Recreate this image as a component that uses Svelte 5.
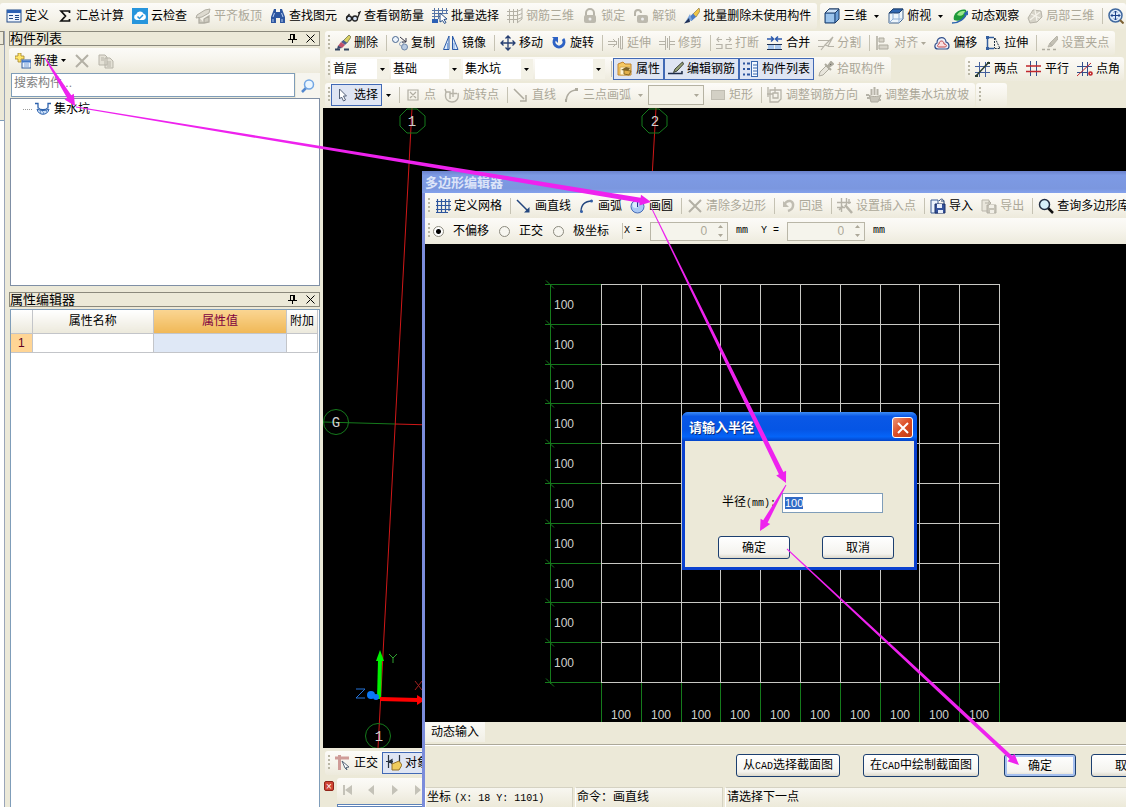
<script lang="ts">
  /**
   * Rebar modelling workspace: toolbars, component list, property editor,
   * drawing canvas, polygon editor window and the radius prompt.
   */
  import { onMount } from 'svelte';

  interface Tool {
    icon?: string;
    text?: string;
    off?: boolean;
    on?: boolean;
    arrow?: boolean;
    tight?: boolean;
    sep?: boolean;
  }

  const sep: Tool = { sep: true };

  const icons: Record<string, string> = {
    define: '<rect x="1" y="2" width="14" height="12" fill="#eef4fd" stroke="#234a86"/><path d="M1 3.500h14" stroke="#2d62b5" stroke-width="3"/><path d="M3 7.500h4M3 10.500h4M9 7.500h4M9 9.500h4M9 11.500h4" stroke="#234a86"/>',
    sigma: '<path d="M12.500 5V3H4l4.500 5L4 13h8.500v-2" fill="none" stroke="#111" stroke-width="1.700"/>',
    cloud: '<rect width="16" height="16" fill="#2795dc"/><path d="M4.500 12a3 3 0 0 1-.3-5.800 4 4 0 0 1 7.400-.4A3.200 3.200 0 0 1 11.500 12z" fill="#fff"/><path d="M5.500 8.500l2 2 3.500-3.500" fill="none" stroke="#2795dc" stroke-width="1.500"/>',
    slab: '<path d="M2 7l8-5 5-1-1 4-7 4-6 1z" fill="#dddad0" stroke="#b0ada2"/><path d="M4 9v6h5v-4l5-3v6l-5 1" fill="#cfccc1" stroke="#b0ada2" stroke-width="1.300"/>',
    find: '<path d="M4 1h2v3h4V1h2l3 8v6h-5v-5H6v5H1V9z" fill="#2d56a0"/><path d="M4.500 5L3 9M11.500 5L13 9M3 11v3M12 11v3" stroke="#b7cdf2"/>',
    glasses: '<circle cx="4" cy="10.500" r="2.500" fill="#d5e3f5" stroke="#222" stroke-width="1.300"/><circle cx="10" cy="10.500" r="2.500" fill="#d5e3f5" stroke="#222" stroke-width="1.300"/><path d="M1.500 10l3-4M12.500 10l2.500-6-2 1" fill="none" stroke="#222" stroke-width="1.300"/>',
    batch: '<path d="M0 2.500h16M0 5.500h16M0 8.500h8M2.500 0v11M6.500 0v11M10.500 0v5M14.500 0v6" stroke="#5675a7"/><path d="M0 11h6v4H0z" fill="#2c60b5"/><path d="M8 5l7 6-3 .5 2 3-1.500 1-2-3L8 14z" fill="#fff" stroke="#234a86"/>',
    rebar3d: '<path d="M0 3.500h10l5-2M0 7.500h10l5-2M0 11.500h10l5-2M2.500 1v14M6.500 1v14M10.500 1v14M15 0v11l-5 4" fill="none" stroke="#b4b1a6"/>',
    lock: '<path d="M4 8V5a4 4 0 0 1 8 0v3" fill="none" stroke="#b7b4a9" stroke-width="2"/><rect x="2" y="7" width="12" height="8" rx="2" fill="#bcb9ae"/><circle cx="8" cy="11" r="1.500" fill="#eee"/>',
    unlock: '<path d="M2 8V5a3 3 0 0 1 6 0" fill="none" stroke="#b7b4a9" stroke-width="2"/><rect x="4" y="7" width="11" height="8" rx="2" fill="#bcb9ae"/><circle cx="9.500" cy="11" r="1.500" fill="#eee"/>',
    brush: '<path d="M15 0L9 6l3 3 4-6z" fill="#f0c648" stroke="#8c7a48" stroke-width=".7"/><path d="M9 5.500L4.500 10l3 3L12 9z" fill="#4a7cc6"/><path d="M6 6L1 14.500 8 12z" fill="#7aa4dc"/><path d="M5 10l-5 5.500 6-1.500z" fill="#1e2f55"/>',
    erase: '<path d="M14 0l2 2-4 6-4-2z" fill="#d9cf62" stroke="#5d6440" stroke-width=".7"/><path d="M8.500 5L12 8l-2 2-4-3z" fill="#4a5f8e"/><path d="M6 7l4 3-3 3-4-2z" fill="#c0506a"/><path d="M3 10.500L7 13l-5 1z" fill="#3b486d"/><path d="M0 14.500h5M9 14.500h5" stroke="#33445e" stroke-width="2"/>',
    cube: '<path d="M1 5l4-4h10v10l-4 4H1z" fill="#6da0d8" stroke="#1c3d69"/><path d="M1 5l4-4h10l-4 4z" fill="#cfe3f8" stroke="#1c3d69"/><path d="M11 5v10" stroke="#1c3d69"/><path d="M2 6h8v8H2z" fill="#9cc4ec"/>',
    cubetop: '<path d="M1 5l4-4h10v10l-4 4H1z" fill="#edf5fc" stroke="#41638c"/><path d="M1 5l4-4h10l-4 4z" fill="#2f68b4" stroke="#1c3d69"/><path d="M11 5v10M5 5v6h10M1 15l4-4" fill="none" stroke="#8fb0d8"/>',
    orbit: '<path d="M2 12C0 6 8 0 14 2c3 6-4 13-12 10z" fill="#1f9a3a"/><path d="M5 7c2-4 5-4 8-4-1 4-4 6-8 4z" fill="#9be88a"/><path d="M0 15c7 0 13-4 15-11l-3 2M15 4l1 3" fill="none" stroke="#2c64b0" stroke-width="1.500"/>',
    local3d: '<path d="M1 10l5-8 8 1 1 6-5 5-7 1z" fill="#d6d3c8" stroke="#b6b3a8"/><path d="M4 6l9 4M8 2l2 11M13 4L3 12" stroke="#f4f2ea" stroke-width="1.300"/>',
    zoomall: '<circle cx="7.500" cy="7.500" r="6.500" fill="#dbe9fa" stroke="#41699f" stroke-width="1.500"/><path d="M12 12l3.500 3.500" stroke="#7b6035" stroke-width="2"/><path d="M7.500 3v9M3 7.500h9M6 4.500L7.500 3 9 4.500M6 10.500L7.500 12 9 10.500M4.500 6L3 7.500 4.500 9M10.500 6L12 7.500 10.500 9" fill="none" stroke="#1c428b"/>',
    copy: '<circle cx="3.500" cy="4.500" r="3" fill="#edf4fc" stroke="#47658f"/><circle cx="12.500" cy="12" r="3" fill="#b9cbe1" stroke="#6f87a9"/><circle cx="9.500" cy="9" r="2" fill="none" stroke="#8fa2be"/><path d="M8 2l6 5M14 7V3M14 7h-4" stroke="#334" fill="none"/>',
    mirror: '<path d="M6 1v13.500H.5zM9.500 1v13.500H15z" fill="#dceafa" stroke="#2a5aa8"/><path d="M4.500 8v6M11 8v6" stroke="#79a3dc"/>',
    move: '<path d="M8 1v14M1 8h14M5.500 3.500L8 1l2.500 2.500M5.500 12.500L8 15l2.500-2.500M3.500 5.500L1 8l2.500 2.500M12.500 5.500L15 8l-2.500 2.500" fill="none" stroke="#263f72" stroke-width="1.300"/>',
    rotate: '<path d="M4 4a5 5 0 1 0 8 0" fill="none" stroke="#2d62c4" stroke-width="3"/><path d="M1 2h6v6z" fill="#2d62c4"/>',
    extend: '<path d="M0 6.500h9M0 9.500h9M5 4l4 4-4 4M10.500 3v10M14.500 1v13M12.500 1v13h2" stroke="#b6b3a8" fill="none"/>',
    trim: '<path d="M0 6.500h6M0 9.500h6M11 6.500h5M11 9.500h5M6.500 1v14M10.500 1v14M8.500 3v10" stroke="#b6b3a8"/>',
    breaks: '<path d="M0 9.500h6v4H0M16 9.500h-6v4h6M1 4.500h5M10 4.500h5M3 2L1 4.500 3 7M13 2l2 2.500L13 7" fill="none" stroke="#b6b3a8" stroke-width="1.200"/>',
    join: '<path d="M0 9.500h15M0 14.500h15" stroke="#1d2f4e"/><path d="M1 10h6v4H1zM8 10h6v4H8z" fill="#a9c8ee"/><path d="M0 4h6M9 4h6M4 1.500L6.500 4 4 6.500M11 1.500L8.500 4 11 6.500" fill="none" stroke="#2c59ad" stroke-width="1.500"/>',
    split: '<path d="M0 5.500h11M0 11.500h6M10 11.500h6M3 15l4-5M7 10l8-8-5 9z" fill="none" stroke="#b6b3a8" stroke-width="1.200"/>',
    align: '<path d="M2 1v14" stroke="#aeab9f" stroke-width="1.500"/><path d="M4 3h5v4H4zM4 10h9v4H4z" fill="#d7d4c9" stroke="#aeab9f"/>',
    offset: '<path d="M4 14C0 14 0 9 3 8c0-7 9-7 9-1 4 1 4 7 0 7z" fill="#edf1fa" stroke="#34518c" stroke-width="1.200"/><path d="M5 12c-2 0-2-2 0-3 0-4 5-4 5 0 3 0 3 3 1 3z" fill="#fbdede" stroke="#c04648"/>',
    stretch: '<path d="M3 2.500h6M3 13.500h6M2.500 3v10" fill="none" stroke="#345f9f" stroke-width="1.500"/><path d="M9.500 3v10M10 3l5 10.500H9" stroke="#234" stroke-dasharray="2 1" fill="none"/><path d="M1 1h3v3H1zM1 12h3v3H1z" fill="#345f9f"/>',
    grip: '<path d="M15 1L8 8l2 3 6-7zM8 8l-2 4 4-1z" fill="#c4c1b5" stroke="#b6b3a8"/><path d="M0 14.500h3M5 14.500h3M11 14.500h3" stroke="#aeab9f" stroke-width="1.500"/>',
    props: '<path d="M1 3l5-2 2 2h6v11H1z" fill="#f5c963" stroke="#c18430"/><path d="M3 6h10v8H3z" fill="#fff5d4" stroke="#d7aa53"/><path d="M4 9l5-3 4 1-2 3z" fill="#7b6228"/><path d="M7 9l7 1-2 4-5-1z" fill="#e2b04b" stroke="#8b6a21"/>',
    editbar: '<path d="M0 12.500h14V10" fill="none" stroke="#1c2b48" stroke-width="1.500"/><path d="M14.500 1L7 8l-1.500 3.500L9 10l6.500-7z" fill="#9aa578" stroke="#3b4038"/>',
    list: '<path d="M0 2.500h2M4 2.500h3M0 8h2M4 8h3M0 13.500h2M4 13.500h3" stroke="#2c55a0" stroke-width="2"/><rect x="8.500" y=".5" width="6" height="15" fill="#f3f8ff" stroke="#3866ad"/><path d="M10 4h4M10 7h4M10 10h4M10 13h4" stroke="#3866ad"/>',
    pick: '<path d="M1 15l1-4 6-6 3 3-6 6z" fill="#e8e5dc" stroke="#aeab9f"/><path d="M7 3l6 6M10 5l3-4 2 2-4 3z" stroke="#aeab9f" stroke-width="2"/>',
    twopoint: '<path d="M4.500 1v15M10.500 1v15M0 5.500h15M0 11.500h15" stroke="#44609d"/><path d="M1 15L14 1" stroke="#2b3d2f" stroke-width="1.500"/><path d="M0 14h3v2H0zM12 1h3v2h-3z" fill="#2b3d2f"/>',
    parallel: '<path d="M4.500 0v15M10.500 0v15" stroke="#33508d"/><path d="M0 5h15M0 10.500h15" stroke="#c1272d" stroke-width="1.300"/>',
    angle: '<path d="M5.500 1v14M10.500 1v14M0 5.500h15M0 11.500h10" stroke="#33508d"/><path d="M0 15L14 2" stroke="#c1272d"/><circle cx="13.500" cy="12.500" r="1.500" fill="none" stroke="#c1272d" stroke-width="1.700"/>',
    cursor: '<path d="M4.500 2v10l2-2 2 4 2-1-2-4h3z" fill="#fff" stroke="#536078"/>',
    point: '<path d="M3 3h10v10H3zM5 5l6 6M11 5l-6 6" fill="none" stroke="#b0ada2" stroke-width="1.200"/>',
    rotpoint: '<path d="M2 5h4v7M2 5c-2 7 2 10 6 10 5 0 7-4 6-9M9 2v8M6 6.500h7M1 2l1 3" fill="none" stroke="#b6b3a8" stroke-width="1.400"/>',
    lineoff: '<path d="M1 2l10 10M13 8v6H7" fill="none" stroke="#aeab9f" stroke-width="1.500"/>',
    arcoff: '<path d="M2 15C2 8 6 3 13 3" fill="none" stroke="#aeab9f" stroke-width="1.500"/><path d="M11 1h3v3h-3zM1 12h2v3H1z" fill="#aeab9f"/>',
    rect: '<rect x="1.500" y="3.500" width="13" height="9" fill="#d3d0c5" stroke="#c0bdb2"/>',
    adjust: '<path d="M3 3h11v9l-3 3H3zM6 6h5v5H6zM0 7h6M8 0v6M1 0v10" fill="none" stroke="#b6b3a8" stroke-width="1.300"/>',
    slope: '<path d="M3 8c2 2 9 2 12 0l-3 7H5z" fill="#c7c4b9" stroke="#aeab9f"/><path d="M5.500 2v6M8.500 0v8M11.500 2v6M0 8h3M1 11h4M12 13h3" stroke="#b6b3a8" stroke-width="2"/>',
    mesh: '<path d="M2.500 1v14M6.500 1v14M10.500 1v14M14 1v12M1 3.500h15M1 7.500h15M1 11.500h15M1 14.500h12" stroke="#2d559d" stroke-width="1.200"/>',
    line: '<path d="M1 2l11 11" stroke="#23467e" stroke-width="1.500"/><path d="M13.500 9v5.500H8z" fill="#23467e"/>',
    arc: '<path d="M2 14C2 7 6 3 13 3" fill="none" stroke="#23467e" stroke-width="1.300"/><circle cx="12.500" cy="3" r="1.500" fill="#345fa5"/><circle cx="2.500" cy="13.500" r="1.500" fill="#345fa5"/>',
    circle: '<circle cx="7.500" cy="8.500" r="6.500" fill="#a9c8f4" stroke="#466cb7"/><circle cx="5.500" cy="7" r="3" fill="#dcebfd"/><path d="M7.500 9V4" stroke="#2b3796"/>',
    cross: '<path d="M2 2l12 12M14 2L2 14" stroke="#b3b0a5" stroke-width="2"/>',
    undo: '<path d="M3 3v6h6z" fill="#c0bdb2"/><path d="M4 7c3-6 10-5 9 1-.3 3-2 4-5 5" fill="none" stroke="#c0bdb2" stroke-width="2.500"/>',
    insert: '<path d="M0 4.500h14M0 9.500h8M4.500 0v14M9.500 0v7M12 1v5M2 12l4-4" stroke="#b6b3a8" stroke-width="1.400"/><path d="M8 7l7 8" stroke="#b6b3a8" stroke-width="2.500"/>',
    import: '<path d="M1 2h7v13H1z" fill="#eaf2fc" stroke="#3c5d94"/><path d="M5 6h10v9H5z" fill="#34529b" stroke="#1c3166"/><path d="M7 6h5v4H7zM8 12h5v3H8z" fill="#e7eefb"/><path d="M9 3c2-3 4-2 5 0v3M14 3h-3" fill="none" stroke="#234277"/>',
    export: '<path d="M1 2h7v11H1z" fill="#e9e6dc" stroke="#b9b6ab"/><path d="M6 7h9v8H6z" fill="#c6c3b8" stroke="#b3b0a5"/><path d="M8 7h5v3H8zM9 12h4v3H9z" fill="#f1efe7"/><path d="M4 5h6M8 3l2 2-2 2" fill="none" stroke="#b3b0a5"/>',
    query: '<path d="M10 10l5 5" stroke="#111" stroke-width="2.500"/><circle cx="6.500" cy="6.500" r="5" fill="#d7f0fb" stroke="#222e44" stroke-width="1.500"/>',
    search: '<path d="M6 10l-4 4" stroke="#5388ce" stroke-width="2.500"/><circle cx="9" cy="6.500" r="4.500" fill="#eaf6ff" stroke="#72a6e3" stroke-width="1.500"/>',
    add: '<path d="M3 0h3v3h3v3H6v3H3V6H0V3h3z" fill="#ffe66b" stroke="#a3842a" stroke-width=".8"/><rect x="7" y="7" width="9" height="8" fill="#eaf3ff" stroke="#35609f"/><path d="M7 8.500h9" stroke="#3e77ca" stroke-width="2"/><path d="M9 11h5M9 13h5" stroke="#7da1d5"/>',
    paste: '<path d="M1 2h6l2 2v8H1zM7 5h5l3 3v7H7z" fill="#e4e1d6" stroke="#b7b4a9"/><path d="M9 9h4M9 11h4M9 13h4M3 5h3M3 7h3" stroke="#b7b4a9"/>',
    pit: '<path d="M0 2.500h3v4c2 3 8 3 10 0v-4h3" fill="none" stroke="#2d62ad" stroke-width="1.300"/><path d="M2 8c3 2 9 2 12 0-1 7-11 7-12 0z" fill="#c9def8" stroke="#2d62ad"/><path d="M5 11h1M8 12h1M11 10h1M7 10h1" stroke="#2d62ad"/>',
    ortho: '<path d="M0 3h14M4.500 0v15" stroke="#cf9c98" stroke-width="3"/><path d="M7 6l7 6-3 .5 1 2.500-2-2z" fill="#fff" stroke="#567"/>',
    snap: '<path d="M2.500 0v13M13.500 0v9M0 6.500h7M3 6.500l3-2v4z" fill="#26313f" stroke="#26313f" stroke-width="1.200"/><path d="M6 9l7-3 3 4-3 5H6z" fill="#f0cc5d" stroke="#93702c"/>'
  };

  const mainTools: Tool[] = [
    { icon: 'define', text: '定义' },
    { icon: 'sigma', text: '汇总计算' },
    { icon: 'cloud', text: '云检查' },
    { icon: 'slab', text: '平齐板顶', off: true },
    { icon: 'find', text: '查找图元' },
    { icon: 'glasses', text: '查看钢筋量' },
    { icon: 'batch', text: '批量选择' },
    { icon: 'rebar3d', text: '钢筋三维', off: true },
    { icon: 'lock', text: '锁定', off: true },
    { icon: 'unlock', text: '解锁', off: true },
    { icon: 'brush', text: '批量删除未使用构件' }
  ];

  const viewTools: Tool[] = [
    { icon: 'cube', text: '三维', arrow: true },
    { icon: 'cubetop', text: '俯视', arrow: true },
    { icon: 'orbit', text: '动态观察' },
    { icon: 'local3d', text: '局部三维', off: true },
    sep,
    { icon: 'zoomall' }
  ];

  const editTools: Tool[] = [
    { icon: 'erase', text: '删除' },
    sep,
    { icon: 'copy', text: '复制' },
    { icon: 'mirror', text: '镜像' },
    sep,
    { icon: 'move', text: '移动' },
    { icon: 'rotate', text: '旋转' },
    sep,
    { icon: 'extend', text: '延伸', off: true },
    { icon: 'trim', text: '修剪', off: true },
    sep,
    { icon: 'breaks', text: '打断', off: true },
    { icon: 'join', text: '合并' },
    { icon: 'split', text: '分割', off: true },
    sep,
    { icon: 'align', text: '对齐', off: true, arrow: true, tight: true },
    { icon: 'offset', text: '偏移' },
    { icon: 'stretch', text: '拉伸' },
    sep,
    { icon: 'grip', text: '设置夹点', off: true }
  ];

  const levels = ['首层', '基础', '集水坑', ''];

  const panelTools: Tool[] = [
    { icon: 'props', text: '属性', on: true },
    { icon: 'editbar', text: '编辑钢筋', on: true },
    { icon: 'list', text: '构件列表', on: true },
    { icon: 'pick', text: '拾取构件', off: true }
  ];

  const axisTools: Tool[] = [
    { icon: 'twopoint', text: '两点' },
    { icon: 'parallel', text: '平行' },
    { icon: 'angle', text: '点角' }
  ];

  const drawTools: Tool[] = [
    { icon: 'cursor', text: '选择', on: true },
    { arrow: true, tight: true },
    sep,
    { icon: 'point', text: '点', off: true },
    { icon: 'rotpoint', text: '旋转点', off: true },
    sep,
    { icon: 'lineoff', text: '直线', off: true },
    { icon: 'arcoff', text: '三点画弧', off: true, arrow: true }
  ];

  const shapeTools: Tool[] = [
    { icon: 'rect', text: '矩形', off: true },
    sep,
    { icon: 'adjust', text: '调整钢筋方向', off: true },
    { icon: 'slope', text: '调整集水坑放坡', off: true }
  ];

  const snapTools: Tool[] = [
    { icon: 'ortho', text: '正交' },
    { icon: 'snap', text: '对象捕捉', on: true }
  ];

  const polygonTools: Tool[] = [
    { icon: 'mesh', text: '定义网格' },
    sep,
    { icon: 'line', text: '画直线' },
    { icon: 'arc', text: '画弧' },
    { icon: 'circle', text: '画圆' },
    sep,
    { icon: 'cross', text: '清除多边形', off: true },
    sep,
    { icon: 'undo', text: '回退', off: true },
    sep,
    { icon: 'insert', text: '设置插入点', off: true },
    sep,
    { icon: 'import', text: '导入' },
    { icon: 'export', text: '导出', off: true },
    sep,
    { icon: 'query', text: '查询多边形库' }
  ];

  const modes = ['不偏移', '正交', '极坐标'];
  let mode = $state('不偏移');

  const cell = 39.8;
  const lines = Array.from({ length: 11 }, (_, i) => Math.round(i * cell));
  const cells = lines.slice(0, 10);

  // [x1, y1, x2, y2, shaft width at the head]
  const arrows = [
    [45, 58, 75, 106, 5],
    [76, 107, 651, 202, 5],
    [652, 209, 786, 483, 5],
    [786, 485, 760, 531, 5],
    [787, 549, 1019, 765, 4]
  ];

  function arrowPoints([x1, y1, x2, y2, w]: number[]) {
    const len = Math.hypot(x2 - x1, y2 - y1);
    const ux = (x2 - x1) / len;
    const uy = (y2 - y1) / len;
    const at = (d: number, s: number) =>
      `${(x1 + ux * d - uy * s).toFixed(1)},${(y1 + uy * d + ux * s).toFixed(1)}`;
    const neck = len - 11;
    return [
      at(0, 0.5), at(neck, w / 2), at(neck, w / 2 + 3), at(len, 0),
      at(neck, -w / 2 - 3), at(neck, -w / 2), at(0, -0.5)
    ].join(' ');
  }

  let radiusInput: HTMLInputElement;
  onMount(() => {
    radiusInput.focus();
    radiusInput.select();
  });
</script>

{#snippet icon(name: string)}
  <svg class="icon" viewBox="0 0 16 16" aria-hidden="true">{@html icons[name]}</svg>
{/snippet}

{#snippet caret()}
  <svg class="caret" viewBox="0 0 5 3" aria-hidden="true"><path d="M0 0h5L2.500 3z" /></svg>
{/snippet}

{#snippet tools(items: Tool[])}
  {#each items as item}
    {#if item.sep}
      <span class="sep"></span>
    {:else}
      <button
        class="tool"
        class:on={item.on}
        class:tight={item.tight}
        disabled={item.off}
        aria-label={item.text ?? '更多'}
      >
        {#if item.icon}{@render icon(item.icon)}{/if}
        {#if item.text}<span>{item.text}</span>{/if}
        {#if item.arrow}{@render caret()}{/if}
      </button>
    {/if}
  {/each}
{/snippet}

{#snippet panelTitle(title: string)}
  <header class="panel-title">
    <h2>{title}</h2>
    <button aria-label="固定"><svg viewBox="0 0 9 9"><path d="M2 0.500h5M2.500 0v5M5.500 0v5M6.500 0v5M0 5.500h9M4.500 5v4" /></svg></button>
    <button aria-label="关闭"><svg viewBox="0 0 9 9"><path d="M0.500 0.500l8 8M8.500 0.500l-8 8" /></svg></button>
  </header>
{/snippet}

<div class="app">
  <div class="top-bar">
    <div class="strip flat">{@render tools(mainTools)}</div>
    <div class="strip flat views">{@render tools(viewTools)}</div>
  </div>

  <div class="workspace">
    <div class="dock-edge"><i></i><b></b></div>

    <aside class="side">
      <section class="components">
        {@render panelTitle('构件列表')}
        <div class="strip list-tools">
          <button class="tool tight">{@render icon('add')}<span>新建</span>{@render caret()}</button>
          <button class="tool" disabled aria-label="删除">{@render icon('cross')}</button>
          <button class="tool" disabled aria-label="复制">{@render icon('paste')}</button>
        </div>
        <div class="search">
          <input type="text" placeholder="搜索构件..." aria-label="搜索构件" />
          <button aria-label="搜索">{@render icon('search')}</button>
        </div>
        <ul class="tree">
          <li><span class="branch"></span>{@render icon('pit')}<span>集水坑</span></li>
        </ul>
      </section>

      <section class="properties">
        {@render panelTitle('属性编辑器')}
        <div class="sheet">
          <table>
            <thead>
              <tr><th class="num"></th><th>属性名称</th><th class="value">属性值</th><th class="extra">附加</th></tr>
            </thead>
            <tbody>
              <tr><td class="num">1</td><td></td><td class="value"></td><td></td></tr>
            </tbody>
          </table>
        </div>
      </section>
    </aside>

    <main>
      <div class="bars">
        <div class="row"><div class="strip"><span class="grip"></span>{@render tools(editTools)}</div></div>
        <div class="row spread">
          <div class="strip">
            <span class="grip"></span>
            {#each levels as level, i}
              <span class="combo" class:short={i === 0}>
                <select aria-label="楼层与构件 {i + 1}"><option>{level}</option></select>
                {@render caret()}
              </span>
            {/each}
            <span class="sep"></span>
            {@render tools(panelTools)}
          </div>
          <div class="strip axes"><span class="grip"></span>{@render tools(axisTools)}</div>
        </div>
        <div class="row">
          <div class="strip">
            <span class="grip"></span>
            {@render tools(drawTools)}
            <span class="combo boxed">
              <select disabled aria-label="画弧方式"><option></option></select>
              {@render caret()}
            </span>
            {@render tools(shapeTools)}
          </div>
          <div class="strip stub"><span class="grip"></span></div>
        </div>
      </div>

      <svg class="canvas" role="img" aria-label="轴网">
        <g class="red">
          <path d="M89 0L55 640M333 0L329 70M72 316L110 317" />
        </g>
        <g class="green">
          <path d="M0 314L72 316" />
          <path d="M84 1h10l8 7v10l-8 7H84l-7-7V8zM326 1h10l8 7v10l-8 7h-10l-7-7V8z" />
          <circle cx="13" cy="314" r="12.500" />
          <circle cx="55" cy="628" r="12.500" />
        </g>
        <g class="bubble">
          <text x="89" y="18">1</text>
          <text x="332" y="18">2</text>
          <text x="13" y="319">G</text>
          <text x="56" y="633">1</text>
        </g>
        <path d="M56 591L57 552" stroke="#00f000" stroke-width="4" />
        <path d="M53 553l4-11 4 11z" fill="#00f000" />
        <path d="M57 591l38 1" stroke="#f00" stroke-width="4" />
        <path d="M94 587l8 5-8 5z" fill="#f00" />
        <circle cx="48" cy="587" r="4" fill="#0a78f5" />
        <circle cx="53" cy="589" r="3" fill="#0a78f5" />
        <path d="M33 581h9l-9 9h9" fill="none" stroke="#2472d8" />
        <path d="M66 546l4 4 4-4M70 550v5" fill="none" stroke="#2fa02f" />
        <path d="M92 573l7 9M99 573l-7 9" stroke="#a02020" />
      </svg>

      <div class="row foot"><div class="strip"><span class="grip"></span>{@render tools(snapTools)}</div></div>
      <div class="player">
        <button class="mini-close" aria-label="关闭">×</button>
        <div class="track">
          <div class="strip steps">
            <svg viewBox="0 0 90 12" aria-hidden="true">
              <path d="M4 1h2v10H4zM13 1v10L6 6zM35 1v10l-6-5zM53 1v10l6-5zM76 1v10l6-5z" />
            </svg>
          </div>
          <div class="timeline"></div>
        </div>
      </div>
    </main>
  </div>

  <section class="editor">
    <h1>多边形编辑器</h1>
    <div class="editor-body">
      <div class="strip"><span class="grip"></span>{@render tools(polygonTools)}</div>
      <div class="strip offsets">
        <span class="grip"></span>
        <div class="modes">
          {#each modes as name}
            <label><input type="radio" name="mode" value={name} bind:group={mode} />{name}</label>
          {/each}
        </div>
        <span class="sep"></span>
        {#each ['X', 'Y'] as axis}
          <label class="coord">
            <span class="latin">{axis} =</span>
            <span class="spin">
              <input type="text" value="0" disabled />
              <svg viewBox="0 0 5 12" aria-hidden="true"><path d="M0 3h5L2.500 0zM0 9h5l-2.500 3z" /></svg>
            </span>
            <span class="latin">mm</span>
          </label>
        {/each}
      </div>

      <svg class="plan" role="img" aria-label="网格">
        <g class="green">
          <path d="M125.500 40v400" />
          {#each lines as p}
            <path d="M120 {40.500 + p}h56M121 {36.500 + p}l8 8" />
            <path d="M{176.500 + p} 438v40" />
          {/each}
        </g>
        <g class="white">
          {#each lines as p}
            <path d="M176 {40.500 + p}h398M{176.500 + p} 40v399" />
          {/each}
        </g>
        <g class="dims">
          {#each cells as p}
            <text x="139" y={65 + p}>100</text>
            <text x={196 + p} y="475">100</text>
          {/each}
        </g>
      </svg>

      <div class="tabs"><button>动态输入</button></div>
      <div class="actions">
        <button class="xp">从<span class="latin">CAD</span>选择截面图</button>
        <button class="xp">在<span class="latin">CAD</span>中绘制截面图</button>
        <button class="xp wide default">确定</button>
        <button class="xp wide">取消</button>
      </div>
      <footer>
        <span>坐标 <span class="latin">(X: 18 Y: 1101)</span></span>
        <span>命令：画直线</span>
        <span>请选择下一点</span>
      </footer>
    </div>
  </section>

  <div class="dialog" role="dialog" aria-labelledby="radius-title">
    <header>
      <h2 id="radius-title">请输入半径</h2>
      <button aria-label="关闭"><svg viewBox="0 0 12 12"><path d="M1 1l10 10M11 1L1 11" /></svg></button>
    </header>
    <form onsubmit={(e) => e.preventDefault()}>
      <div class="field">
        <label for="radius">半径<span class="latin">(mm):</span></label>
        <input id="radius" type="text" value="100" bind:this={radiusInput} />
      </div>
      <div class="buttons">
        <button class="xp wide">确定</button>
        <button class="xp wide" type="button">取消</button>
      </div>
    </form>
  </div>

  <svg class="guide" aria-hidden="true">
    {#each arrows as arrow}
      <polygon points={arrowPoints(arrow)} />
    {/each}
  </svg>
</div>

<style>
  :global(body) {
    background: #ece9d8;
  }

  .app {
    position: relative;
    display: flex;
    flex-direction: column;
    height: 100vh;
    overflow: hidden;
    padding-top: 3px;
    box-sizing: border-box;
    background: #ece9d8;
    color: #000;
    font: 12px/16px "Liberation Sans", "Noto Sans CJK SC", sans-serif;
  }

  .app :global(*) {
    box-sizing: border-box;
  }

  h1, h2, ul {
    margin: 0;
    padding: 0;
    font-size: 12px;
  }

  button, input, select {
    margin: 0;
    font: inherit;
    color: inherit;
  }

  .latin {
    font-family: "Liberation Mono", monospace;
    font-size: 10px;
    white-space: pre;
  }

  /* toolbars */
  .top-bar, .row {
    display: flex;
  }

  .top-bar {
    gap: 3px;
    height: 26px;
    margin-bottom: 2px;
  }

  .strip {
    display: flex;
    align-items: center;
    flex: none;
    height: 24px;
    padding: 0 2px;
    border-radius: 3px;
    background: linear-gradient(#fcfbf8, #f6f4ec 50%, #edeadc);
  }

  .strip.flat {
    height: 26px;
  }

  .views {
    flex: 1;
    padding: 0;
    overflow: hidden;
  }

  .tool {
    display: flex;
    align-items: center;
    flex: none;
    gap: 3px;
    height: 22px;
    padding: 0 4px;
    border: 0;
    background: none;
    white-space: nowrap;
  }

  .tool:disabled {
    color: #aca899;
  }

  .tool:disabled .caret {
    fill: #aca899;
  }

  .tool.on {
    border: 1px solid #4169b5;
    background: #dfe5f3;
    padding: 0 3px;
  }

  .tool .caret {
    margin: 0 1px 0 4px;
  }

  .tool.tight .caret {
    margin: 0;
  }

  .icon {
    flex: none;
    width: 16px;
    height: 16px;
  }

  .caret {
    flex: none;
    width: 5px;
    height: 3px;
    fill: #000;
  }

  .sep {
    flex: none;
    width: 1px;
    height: 16px;
    margin: 0 1px 0 4px;
    background: #c5c2b3;
  }

  .grip {
    flex: none;
    width: 2px;
    height: 16px;
    margin: 0 1px;
    background: repeating-linear-gradient(#bab7a6 0 2px, transparent 2px 4px);
  }

  .combo {
    display: flex;
    align-items: center;
    width: 70px;
    height: 20px;
    margin-right: 2px;
    padding-right: 4px;
    background: linear-gradient(90deg, #fff 58px, #f3f1e6 58px);
  }

  .combo.short {
    width: 58px;
    background: linear-gradient(90deg, #fff 46px, #f3f1e6 46px);
  }

  .combo select {
    appearance: none;
    flex: 1;
    min-width: 0;
    height: 18px;
    padding: 0 0 0 2px;
    border: 0;
    background: none;
  }

  .combo.boxed {
    width: 56px;
    border: 1px solid #b5b2a2;
    background: #f5f3ea;
  }

  .combo.boxed .caret {
    fill: #aca899;
  }

  /* side panels */
  .workspace {
    display: flex;
    flex: 1;
    min-height: 0;
  }

  .dock-edge {
    display: flex;
    flex-direction: column;
    flex: none;
    gap: 75px;
    width: 5px;
    margin-right: 4px;
    border-right: 1px solid #9aa5b8;
  }

  .dock-edge i {
    height: 14px;
    border: 1px solid #8b897c;
    border-left: 0;
  }

  .dock-edge b {
    flex: 1;
    border-top: 1px solid #7f9db9;
    background: #fff;
  }

  .side {
    display: flex;
    flex-direction: column;
    flex: none;
    gap: 6px;
    width: 311px;
    margin-right: 3px;
  }

  .components {
    display: flex;
    flex-direction: column;
    height: 255px;
  }

  .properties {
    display: flex;
    flex-direction: column;
    flex: 1;
  }

  .panel-title {
    display: flex;
    align-items: center;
    flex: none;
    gap: 9px;
    height: 15px;
    margin-bottom: 2px;
    padding-right: 4px;
    border: 1px solid #8b897c;
  }

  .panel-title h2 {
    flex: 1;
    font-size: 13px;
    font-weight: 400;
    line-height: 13px;
  }

  .panel-title button {
    display: flex;
    padding: 0;
    border: 0;
    background: none;
  }

  .panel-title svg {
    width: 9px;
    height: 9px;
    fill: none;
    stroke: #000;
  }

  .list-tools {
    height: 25px;
  }

  .search {
    display: flex;
    height: 25px;
    margin-left: 2px;
    gap: 1px;
  }

  .search input {
    flex: 1;
    min-width: 0;
    height: 24px;
    padding: 0 0 4px 2px;
    border: 1px solid #7f9db9;
    background: #fff;
  }

  .search input::placeholder {
    color: #808080;
  }

  .search button {
    display: flex;
    align-items: center;
    justify-content: center;
    width: 24px;
    padding: 0;
    border: 0;
    background: #f6f5ef;
  }

  .tree {
    flex: 1;
    margin-left: 1px;
    padding: 2px 12px;
    border: 1px solid #7f8fa5;
    background: #fff;
    list-style: none;
  }

  .tree li {
    display: flex;
    align-items: center;
    gap: 3px;
  }

  .branch {
    width: 9px;
    border-top: 1px dotted #999;
  }

  .sheet {
    flex: 1;
    margin-left: 1px;
    padding: 0 1px 0 0;
    border: 1px solid #7f9db9;
    border-bottom: 0;
    background: #fff;
  }

  table {
    width: 100%;
    border-collapse: collapse;
    table-layout: fixed;
  }

  th, td {
    height: 23px;
    padding: 0;
    border: 1px solid #c3c5c9;
    border-width: 0 1px 1px 0;
    font-weight: 400;
  }

  td {
    height: 19px;
  }

  th {
    background: linear-gradient(#fff, #ece9dc);
  }

  th.num {
    width: 21px;
  }

  td.num {
    background: #ffd595;
    color: #600020;
    text-align: center;
  }

  th.value {
    width: 133px;
    background: linear-gradient(#fad592, #f0b857);
    color: #800040;
  }

  td.value {
    background: #dfe8f6;
  }

  th.extra {
    width: 31px;
    white-space: nowrap;
  }

  /* drawing area */
  main {
    display: flex;
    flex-direction: column;
    flex: 1;
    min-width: 0;
  }

  .bars {
    display: flex;
    flex-direction: column;
    gap: 2px;
    padding: 0 0 1px 2px;
  }

  .spread {
    justify-content: space-between;
  }

  .axes {
    padding-right: 0;
    margin-right: 2px;
  }

  .stub {
    width: 31px;
    margin-left: 1px;
  }

  .canvas {
    display: block;
    flex: 1;
    width: 100%;
    min-height: 0;
    background: #000;
  }

  .red {
    fill: none;
    stroke: #d01818;
  }

  .green {
    fill: none;
    stroke: #157a1c;
  }

  .white {
    fill: none;
    stroke: #c8c8c4;
  }

  .bubble {
    fill: #d0d0d0;
    font-family: "Liberation Mono", monospace;
    font-size: 14px;
    text-anchor: middle;
  }

  .foot {
    flex: none;
    padding: 3px 0 3px 2px;
  }

  .player {
    display: flex;
    flex: none;
    height: 29px;
    gap: 3px;
  }

  .mini-close {
    flex: none;
    width: 10px;
    height: 10px;
    margin: 3px 0 0 1px;
    padding: 0;
    border: 1px solid #8f2418;
    border-radius: 2px;
    background: #cf4434;
    color: #fff;
    font-size: 10px;
    line-height: 7px;
  }

  .track {
    display: flex;
    flex-direction: column;
    flex: 1;
    gap: 2px;
  }

  .steps svg {
    width: 90px;
    height: 12px;
    fill: #c4c2b8;
  }

  .timeline {
    flex: 1;
    border: 1px solid #5d82b8;
    background: #fff;
  }

  /* polygon editor window, partly past the right edge */
  .editor {
    position: absolute;
    top: 171px;
    right: -45px;
    bottom: 0;
    left: 422px;
    display: flex;
    flex-direction: column;
    padding-left: 3px;
    background: #7b8cdb;
  }

  h1 {
    flex: none;
    height: 22px;
    margin-left: -3px;
    padding: 4px 3px;
    background: linear-gradient(#6b82cd, #7d9ae4 20%, #7b97df 80%, #84a2ec);
    color: #dce4f8;
    font-size: 13px;
  }

  .editor-body {
    display: flex;
    flex-direction: column;
    flex: 1;
    min-height: 0;
    background: #ece9d8;
  }

  .editor .strip {
    height: 25px;
    border-radius: 0;
  }

  .editor .offsets {
    height: 26px;
  }

  .modes {
    display: flex;
    gap: 10px;
    padding: 0 9px 0 2px;
  }

  .modes label {
    display: flex;
    align-items: center;
    gap: 9px;
  }

  .modes input {
    appearance: none;
    width: 11px;
    height: 11px;
    border: 1px solid #8c8a7e;
    border-radius: 50%;
    background: #f7f6f0;
  }

  .modes input:checked {
    background: radial-gradient(#000 0 2px, #fff 3px);
  }

  .coord {
    display: flex;
    align-items: center;
    gap: 8px;
    margin-right: 13px;
  }

  .spin {
    display: flex;
    align-items: center;
    width: 78px;
    height: 19px;
    padding-right: 4px;
    border: 1px solid #b9b6a7;
    background: #f5f4ec;
  }

  .spin input {
    flex: 1;
    min-width: 0;
    padding: 0 11px 0 0;
    border: 0;
    background: none;
    color: #aca899;
    text-align: right;
  }

  .spin svg {
    width: 5px;
    height: 12px;
    fill: #aca899;
  }

  .plan {
    display: block;
    flex: 1;
    width: 100%;
    min-height: 0;
    background: #000;
  }

  .dims {
    fill: #d0d0cc;
    font-size: 12px;
    text-anchor: middle;
  }

  .tabs {
    display: flex;
    height: 23px;
    padding-bottom: 2px;
    border-bottom: 1px solid #aca899;
  }

  .tabs button {
    padding: 0 6px;
    border: 0;
    background: linear-gradient(#fbfaf6, #f1efe5);
  }

  .actions {
    display: flex;
    justify-content: flex-end;
    height: 42px;
    padding: 8px 8px 0 0;
    border-top: 1px solid #fff;
  }

  .xp {
    height: 23px;
    padding: 0 6px;
    border: 1px solid #1c3f70;
    border-radius: 3px;
    background: linear-gradient(#fff, #f4f3ee 80%, #dcd8cb);
    white-space: nowrap;
  }

  .xp.wide {
    width: 72px;
  }

  .xp.default {
    box-shadow: inset 0 0 0 2px #a5c0f0;
  }

  .actions .xp {
    margin-left: 15px;
  }

  .actions .xp:nth-child(2) {
    margin-left: 23px;
  }

  .actions .default {
    margin-left: 25px;
  }

  footer {
    display: grid;
    grid-template-columns: 148px 148px 1fr;
    gap: 2px;
    height: 20px;
  }

  footer > span {
    padding: 1px;
    border: 1px solid #d5d2c2;
    border-left-color: #fff;
    background: linear-gradient(#f8f7f1, #ece9d8);
  }

  /* radius prompt */
  .dialog {
    position: absolute;
    top: 412px;
    left: 682px;
    width: 235px;
    padding: 0 3px 3px;
    border-radius: 6px 6px 0 0;
    background: #0b41cf;
  }

  .dialog header {
    display: flex;
    align-items: center;
    justify-content: space-between;
    height: 29px;
    margin: 0 -3px;
    padding: 2px 4px 0 7px;
    border-radius: 6px 6px 0 0;
    background: linear-gradient(#3c8cf5, #0a58e6 15%, #0555e5 60%, #0464f8 85%, #0444c8);
  }

  .dialog h2 {
    color: #fff;
    font-size: 13px;
    text-shadow: 1px 1px #0a2f80;
  }

  .dialog header button {
    display: flex;
    align-items: center;
    justify-content: center;
    width: 21px;
    height: 21px;
    padding: 0;
    border: 1px solid #fff;
    border-radius: 3px;
    background: linear-gradient(135deg, #ee9474, #dc4c24 50%, #c03c14);
  }

  .dialog header svg {
    width: 12px;
    height: 12px;
    stroke: #fff;
    stroke-width: 2;
  }

  .dialog form {
    padding: 52px 20px 8px 33px;
    background: #ece9d8;
  }

  .field {
    display: flex;
    align-items: center;
    justify-content: space-between;
    padding: 0 11px 0 4px;
  }

  .field input {
    width: 101px;
    height: 20px;
    padding: 0 2px;
    border: 1px solid #7f9db9;
    outline: 0;
    background: #fff;
    font-size: 11px;
  }

  .field input::selection {
    background: #316ac5;
    color: #fff;
  }

  .buttons {
    display: flex;
    justify-content: space-between;
    margin-top: 23px;
  }

  /* pointer arrows over everything */
  .guide {
    position: absolute;
    inset: 0;
    width: 100%;
    height: 100%;
    fill: #ee22ee;
    pointer-events: none;
  }
</style>
